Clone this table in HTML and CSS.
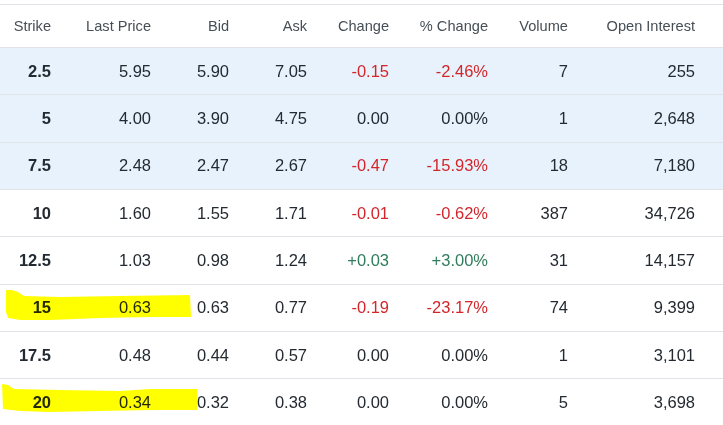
FILE: index.html
```html
<!DOCTYPE html>
<html>
<head>
<meta charset="utf-8">
<link rel="stylesheet" href="styles.css">
</head>
<body>
<div class="wrap">
  <div class="table">
    <div class="row head">
      <div>Strike</div><div>Last Price</div><div>Bid</div><div>Ask</div><div>Change</div><div>% Change</div><div>Volume</div><div>Open Interest</div><div></div>
    </div>
    <div class="row itm">
      <div class="strike">2.5</div><div>5.95</div><div>5.90</div><div>7.05</div><div class="neg">-0.15</div><div class="neg">-2.46%</div><div>7</div><div>255</div><div></div>
    </div>
    <div class="row itm">
      <div class="strike">5</div><div>4.00</div><div>3.90</div><div>4.75</div><div>0.00</div><div>0.00%</div><div>1</div><div>2,648</div><div></div>
    </div>
    <div class="row itm">
      <div class="strike">7.5</div><div>2.48</div><div>2.47</div><div>2.67</div><div class="neg">-0.47</div><div class="neg">-15.93%</div><div>18</div><div>7,180</div><div></div>
    </div>
    <div class="row">
      <div class="strike">10</div><div>1.60</div><div>1.55</div><div>1.71</div><div class="neg">-0.01</div><div class="neg">-0.62%</div><div>387</div><div>34,726</div><div></div>
    </div>
    <div class="row">
      <div class="strike">12.5</div><div>1.03</div><div>0.98</div><div>1.24</div><div class="pos">+0.03</div><div class="pos">+3.00%</div><div>31</div><div>14,157</div><div></div>
    </div>
    <div class="row">
      <div class="strike">15</div><div>0.63</div><div>0.63</div><div>0.77</div><div class="neg">-0.19</div><div class="neg">-23.17%</div><div>74</div><div>9,399</div><div></div>
    </div>
    <div class="row">
      <div class="strike">17.5</div><div>0.48</div><div>0.44</div><div>0.57</div><div>0.00</div><div>0.00%</div><div>1</div><div>3,101</div><div></div>
    </div>
    <div class="row">
      <div class="strike">20</div><div>0.34</div><div>0.32</div><div>0.38</div><div>0.00</div><div>0.00%</div><div>5</div><div>3,698</div><div></div>
    </div>
  </div>
  <svg class="marker" width="723" height="425" viewBox="0 0 723 425">
    <path d="M6,290 L12,290 L18,292 L24,296 L60,297 L120,296 L190,295 L191,317 L150,317 L100,318 L50,320 L20,320 L8,318 L6,312 Z" fill="#ffff00"/>
    <path d="M2,384 L8,385 L14,389 L60,390 L120,391 L150,389 L197,389 L197,410 L150,410 L100,411 L50,412 L20,411 L3,409 Z" fill="#ffff00"/>
  </svg>
</div>
</body>
</html>
```
FILE: styles.css
```css
html, body {
  margin: 0;
  padding: 0;
  background: #ffffff;
}
.wrap {
  position: relative;
  width: 723px;
  height: 425px;
  overflow: hidden;
}
.table {
  padding-top: 4px;
  font-family: "Liberation Sans", Arial, sans-serif;
  color: #232a31;
}
.row {
  display: grid;
  grid-template-columns: 51px 100px 78px 78px 82px 99px 80px 127px 1fr;
  align-items: center;
  box-sizing: border-box;
  height: 47.33px;
  border-bottom: 1px solid #e0e4e9;
  font-size: 16.5px;
}
.row > div {
  text-align: right;
  white-space: nowrap;
}
.head {
  height: 44px;
  border-top: 1px solid #e0e4e9;
  font-size: 14.6px;
  color: #464e56;
}
.itm {
  background: #e8f2fc;
}
.strike {
  font-weight: bold;
}
.neg {
  color: #d3262b;
}
.pos {
  color: #2f7d5c;
}
.marker {
  position: absolute;
  left: 0;
  top: 0;
  mix-blend-mode: multiply;
  pointer-events: none;
}
```
